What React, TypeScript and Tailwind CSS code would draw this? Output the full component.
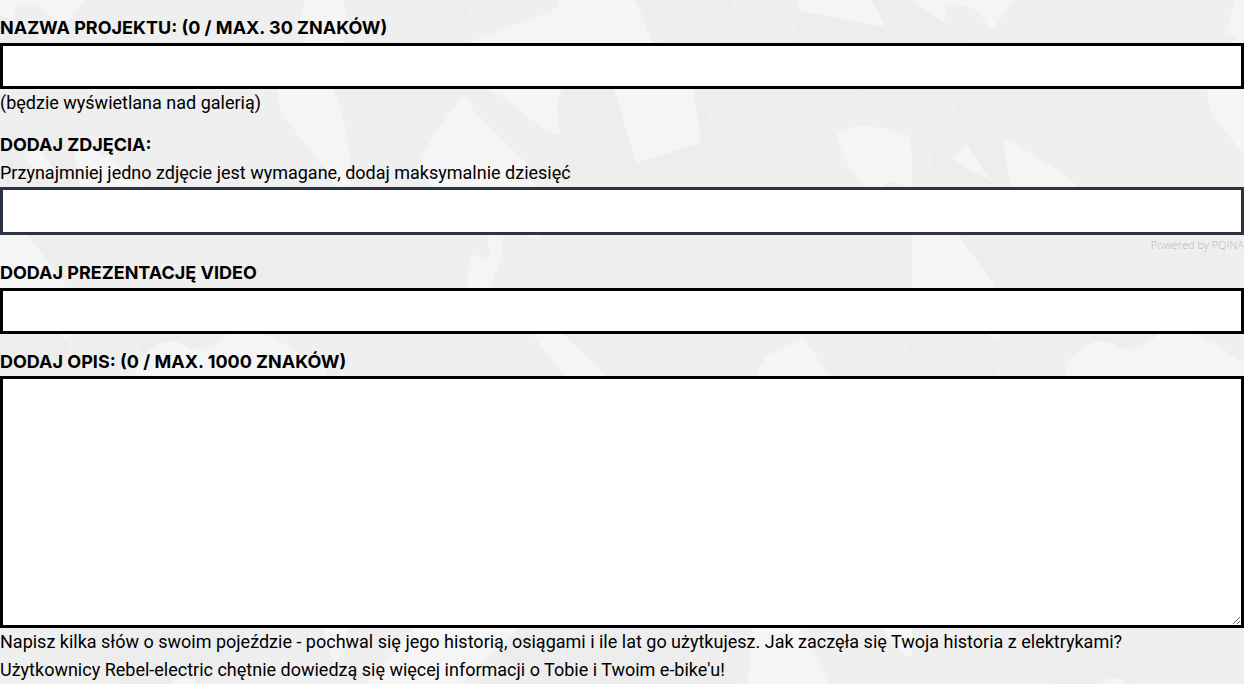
import { useState } from "react";
import type { ReactNode } from "react";

const DARK = [
  "M400 0H470L464 43L395 90Z",
  "M635 0H733L712 89L704 143L660 187H563L557 103L598 42L614 89L636 163L701 143L693 89Z",
  "M799 11L886 27L872 0H912L974 43L950 60L850 95L820 120L790 60Z",
  "M20 89L32 128L-2 138L7 187H80L70 113L73 89Z",
  "M583 288L607 247L633 241L680 239L653 288Z",
  "M710 248L783 270L791 288H727Z",
  "M28 235H98L90 257L63 282Z",
  "M165 275L210 287Q250 260 277 252L255 288H157Z",
  "M-20 334H57L69 341L67 376H-27Z",
  "M135 334H230L190 349Q168 334 143 356Z",
  "M527 360Q545 342 555 368Q538 372 527 360Z",
  "M563 334H638L637 344L620 355L593 362Z",
  "M80 628H250L200 684H120Z",
  "M480 684L520 628H700L740 684Z",
];

const LIGHT = [
  "M-17 0V3L15 23V5Q50 2 58 27Q61 31 64 27L84 0Z",
  "M799 0H872L886 27L799 11Z",
  "M306 0L296 32L307 37L280 75Q274 100 285 118L328 172L335 187H350Q352 135 333 89L343 43Q350 17 342 0Z",
  "M558 0Q558 9 550 12L474 40L472 43L488 89L507 100L538 125Q550 135 560 134L557 103L562 89L614 89L636 163L701 143L693 89L652 43L635 0Z",
  "M461 99Q466 94 470 103Q474 113 485 123L527 163L535 187H433L416 168Q428 139 461 99Z",
  "M837 137Q836 130 850 128Q872 122 909 136Q912 138 912 187H905Q892 176 883 187H863L845 160Z",
  "M-18 235H28L63 282L65 288H-18Z",
  "M37 144L22 157L35 168L62 181Z",
  "M73 141H78L123 167Q137 176 147 187H80Z",
  "M57 334L69 341V334Z",
  "M227 334Q215 352 190 349Q168 330 143 356Q136 366 135 376H327Q328 367 314 363L267 334Z",
  "M487 235L490 258Q486 261 478 256Q470 253 469 258L468 288H489Q503 260 503 235Z",
  "M525 235Q538 243 540 235Z",
  "M532 334L565 376H605L593 362L563 334Z",
  "M756 376Q761 362 768 355L800 339Q804 338 806 342L829 376Z",
  "M323 628H350L335 665Z",
  "M415 628L365 684H460L480 664L520 628Z",
  "M752 628L748 684H830L800 628Z",
  "M882 628H912V657Q896 652 882 628Z",
  "M170 684Q184 672 198 684Z",
];

function Backdrop() {
  return (
    <svg aria-hidden="true" className="pointer-events-none absolute inset-0 -z-10 h-full w-full">
      <defs>
        <pattern id="camo" width="930" height="1080" patternUnits="userSpaceOnUse">
          {[-930, 0, 930].map((x) => (
            <g key={x} transform={`translate(${x} 0)`}>
              {DARK.map((d) => (
                <path key={d} d={d} fill="#ededed" />
              ))}
              {LIGHT.map((d) => (
                <path key={d} d={d} fill="#f5f5f5" />
              ))}
            </g>
          ))}
        </pattern>
      </defs>
      <rect width="100%" height="100%" fill="url(#camo)" />
    </svg>
  );
}

function FieldLabel({ id, children }: { id: string; children: ReactNode }) {
  return (
    <label htmlFor={id} className="block pt-3.5 font-['Inter',sans-serif] text-lg/7 font-bold uppercase">
      {children}
    </label>
  );
}

const box = "block w-full rounded-none border-3 border-black bg-white px-3 outline-none";

export default function App() {
  const [name, setName] = useState("");
  const [about, setAbout] = useState("");
  return (
    <form className="relative isolate min-h-screen overflow-hidden bg-[#efefef] font-['Roboto',sans-serif] text-lg/7 text-black">
      <Backdrop />
      <FieldLabel id="name">Nazwa projektu: ({name.length} / max. 30 znaków)</FieldLabel>
      <input id="name" maxLength={30} value={name} onChange={(e) => setName(e.target.value)} className={`${box} mt-px h-[46px]`} />
      <p>(będzie wyświetlana nad galerią)</p>

      <FieldLabel id="photos">Dodaj zdjęcia:</FieldLabel>
      <p>Przynajmniej jedno zdjęcie jest wymagane, dodaj maksymalnie dziesięć</p>
      <div className="h-12 border-3 border-[#2b3344] bg-white">
        <input id="photos" type="file" multiple accept="image/*" className="block h-full w-full opacity-0" />
      </div>
      <div className="flex h-6 items-start justify-end pt-1">
        <a href="#pqina" className="font-['Open_Sans',sans-serif] text-[11px]/3 font-light text-[#b8b8b8]">
          Powered by PQINA
        </a>
      </div>

      <div className="-mt-3.5">
        <FieldLabel id="video">Dodaj prezentację video</FieldLabel>
      </div>
      <input id="video" type="url" className={`${box} mt-px h-[46px]`} />

      <FieldLabel id="about">Dodaj opis: ({about.length} / max. 1000 znaków)</FieldLabel>
      <textarea id="about" maxLength={1000} value={about} onChange={(e) => setAbout(e.target.value)} className={`${box} h-[252px] py-2`} />
      <p>
        Napisz kilka słów o swoim pojeździe - pochwal się jego historią, osiągami i ile lat go użytkujesz. Jak zaczęła się Twoja historia z elektrykami?
        <br />
        Użytkownicy Rebel-electric chętnie dowiedzą się więcej informacji o Tobie i Twoim e-bike'u!
      </p>
    </form>
  );
}
